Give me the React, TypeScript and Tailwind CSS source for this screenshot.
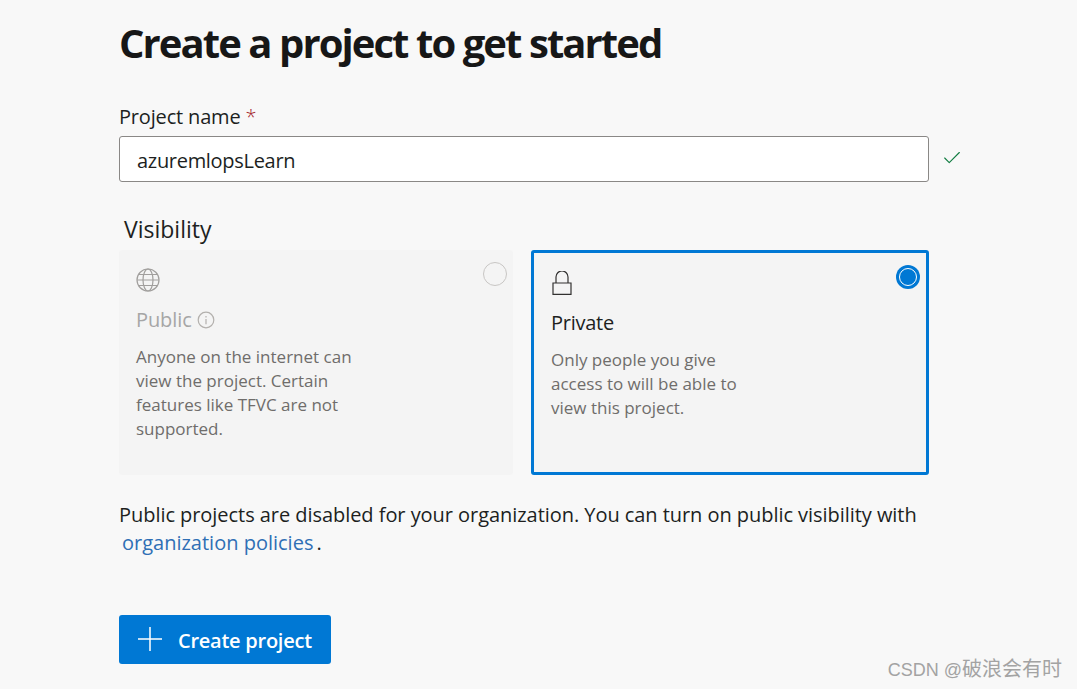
import { Check } from "lucide-react";

const font = "font-['Open_Sans','Noto_Sans','Noto_Sans_CJK_SC',sans-serif]";

function GlobeIcon() {
  return (
    <svg width="24" height="24" viewBox="0 0 24 24" fill="none" stroke="#a19f9d" strokeWidth="1.2">
      <circle cx="12" cy="12" r="11" />
      <ellipse cx="12" cy="12" rx="5" ry="11" />
      <path d="M1 12h22M2.5 6.5h19M2.5 17.5h19" />
    </svg>
  );
}

function InfoIcon() {
  return (
    <svg width="18" height="18" viewBox="0 0 18 18" fill="none" stroke="#b3b0ad" strokeWidth="1.2">
      <circle cx="9" cy="9" r="7.8" />
      <path d="M9 8v5.2M9 5v1.4" />
    </svg>
  );
}

function LockIcon() {
  return (
    <svg width="20" height="24" viewBox="0 0 20 24" fill="none" stroke="#323130" strokeWidth="1.2">
      <path d="M1 12h18v11.4H1zM4 12V6a6 6 0 0 1 12 0v6" />
    </svg>
  );
}

export default function App() {
  return (
    <div className={`${font} relative h-[689px] w-[1077px] overflow-hidden bg-[#f8f8f8] pl-[119px] text-[#201f1e]`}>
      <h1 className="h-[86px] pt-[14px] text-[40px] leading-[58px] font-bold tracking-[-1.93px] whitespace-nowrap text-[#171717]">
        Create a project to get started
      </h1>

      <label className="mt-[17px] block h-[33px] text-[20px] leading-[27px] tracking-[-0.17px]">
        Project name <span className="font-light text-[#a4262c]">*</span>
      </label>

      <div className="flex items-center">
        <div className="flex h-[46px] w-[810px] items-center rounded-[3px] border border-[#8a8886] bg-white pt-[3px] pl-[17px] text-[20px] tracking-[-0.3px]">
          azuremlopsLearn
        </div>
        <Check className="mt-[-2px] ml-[12px] text-[#107c41]" size={22} strokeWidth={1.2} />
      </div>

      <div className="mt-[32px] h-[36px] pl-[5px] text-[23px] leading-[30px]">Visibility</div>

      <div className="flex w-[810px] gap-[18px]">
        <div className="relative h-[225px] w-[394px] rounded-[3px] bg-[#f4f4f4] pt-[18px] pl-[17px]">
          <GlobeIcon />
          <div className="mt-[14px] flex h-[28px] items-center gap-[5px] text-[#a6a6a6]">
            <span className="text-[20px] tracking-[-0.1px]">Public</span>
            <InfoIcon />
          </div>
          <p className="mt-[11px] w-[240px] text-[17px] leading-[24px] text-[#6f6d6b]">
            Anyone on the internet can view the project. Certain features like TFVC are not supported.
          </p>
          <span className="absolute top-[12px] right-[6px] h-[24px] w-[24px] rounded-full border border-[#c8c6c4]" />
        </div>

        <div className="relative h-[225px] w-[398px] rounded-[3px] border-[3px] border-[#0078d4] bg-[#f4f4f4] pt-[18px] pl-[17px]">
          <div className="ml-[1px]">
            <LockIcon />
          </div>
          <div className="mt-[14px] h-[28px] text-[20px] leading-[28px] tracking-[-0.25px]">Private</div>
          <p className="mt-[11px] w-[200px] text-[17px] leading-[24px] text-[#6f6d6b]">
            Only people you give access to will be able to view this project.
          </p>
          <span className="absolute top-[12px] right-[6px] flex h-[24px] w-[24px] items-center justify-center rounded-full bg-[#0078d4]">
            <span className="h-[18px] w-[18px] rounded-full border border-white" />
          </span>
        </div>
      </div>

      <p className="mt-[26px] h-[28px] text-[20px] leading-[28px] tracking-[-0.05px] whitespace-nowrap">
        Public projects are disabled for your organization. You can turn on public visibility with
      </p>
      <p className="h-[28px] pl-[3px] text-[20px] leading-[28px]">
        <a className="text-[#2f6fb5]">organization policies</a>
        <span className="ml-[3px]">.</span>
      </p>

      <button className="mt-[58px] flex h-[49px] w-[212px] items-center rounded-[3px] bg-[#0078d4] pt-[3px] pl-[18px] text-[20px] font-semibold tracking-[-0.25px] text-white">
        <svg width="26" height="26" viewBox="0 0 26 26" stroke="currentColor" strokeWidth="1.5" className="mt-[-4px] shrink-0">
          <path d="M13 1v24M1 13h24" />
        </svg>
        <span className="ml-[15px]">Create project</span>
      </button>

      <span className="absolute right-[15px] bottom-[7px] flex items-baseline gap-[0px] font-['Liberation_Sans','Noto_Sans_CJK_SC',sans-serif] text-[20px] leading-[24px] text-[#a3a3a3]">
        <span className="text-[18px] whitespace-pre">CSDN @</span>
        <span>破浪会有时</span>
      </span>
    </div>
  );
}
